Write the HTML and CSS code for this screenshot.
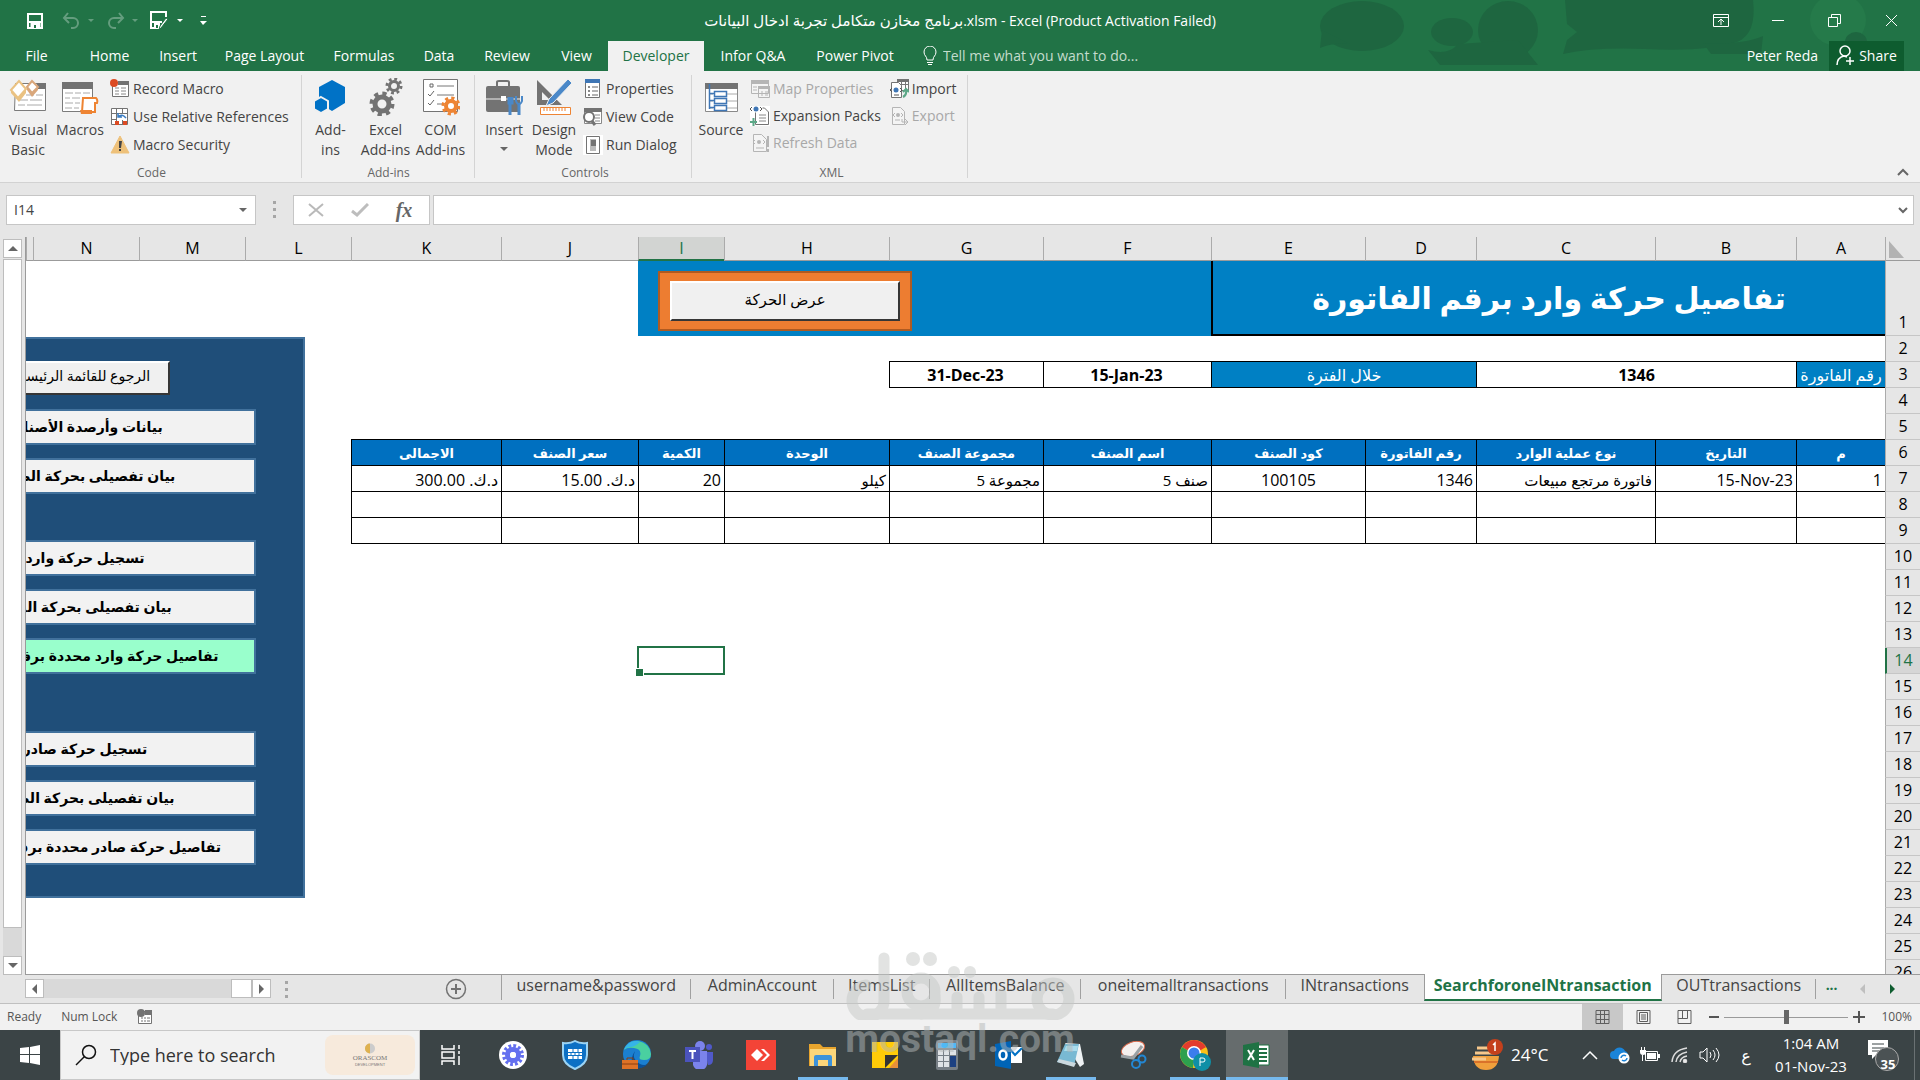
FILE: index.html
```html
<!DOCTYPE html>
<html lang="en">
<head>
<meta charset="utf-8">
<title>Excel</title>
<link rel="stylesheet" href="styles.css">
</head>
<body>
<header class="top">
  <svg class="clouds" width="600" height="65" viewBox="1320 0 600 65" fill="#1e6640">
    <ellipse cx="1362" cy="26" rx="42" ry="25"/><path d="M1322 30l-2 18q14-6 30-4z"/>
    <ellipse cx="1452" cy="32" rx="21" ry="14"/><ellipse cx="1508" cy="30" rx="30" ry="29"/><path d="M1428 50q20 6 30-6l60-4 20 25H1440z"/>
    <path d="M1565 0h188q4 34-16 42-30 10-92 7-50-2-82 5l4-14 10-8-10-8z"/><path d="M1703 43q40 2 60-7l-2 18h-50z"/>
    <ellipse cx="1838" cy="20" rx="28" ry="26" fill="#257a4a"/><ellipse cx="1856" cy="42" rx="11" ry="10"/>
  </svg>
  <div class="titlebar">
    <div class="qat">
      <button class="ic" aria-label="Save"><svg width="18" height="18" viewBox="0 0 18 18" fill="none" stroke="#fff" stroke-width="2"><path d="M2 2h14v14H2zM3 10h12"/><path d="M5 10h9v6H5zM7 13v3" fill="#fff" stroke="#fff" stroke-width="1"/><path d="M8 13h2v3H8z" fill="#217346" stroke="none"/></svg></button>
      <button class="ic dim" aria-label="Undo"><svg width="32" height="18" viewBox="0 0 32 18"><path d="M6 1L2 6l5 5M2 6h9a5 5 0 0 1 0 10H9" fill="none" stroke="#fff" stroke-width="2"/><path d="M26 7h6l-3 3z" fill="#fff"/></svg></button>
      <button class="ic dim" aria-label="Redo"><svg width="32" height="18" viewBox="0 0 32 18"><path d="M13 1l4 5-5 5M17 6H8a5 5 0 0 0 0 10h2" fill="none" stroke="#fff" stroke-width="2"/><path d="M26 7h6l-3 3z" fill="#fff"/></svg></button>
      <button class="ic" aria-label="Save as"><svg width="34" height="20" viewBox="0 0 34 20"><path d="M16 6V1H1v16h9" fill="none" stroke="#fff" stroke-width="2"/><path d="M2 10h10v2H2zM4 12h6v5H4z" fill="#fff"/><path d="M6 14h2v3H6z" fill="#217346"/><path d="M18 8l-7 9-2 2 1-4 6-8z" fill="#fff" stroke="#217346"/><path d="M27 8h6l-3 3z" fill="#fff"/></svg></button>
      <button class="ic" aria-label="Customize toolbar"><svg width="7" height="10" viewBox="0 0 7 10" fill="#fff"><path d="M1 0h5v1H1zM0 5h7L3 9z"/></svg></button>
    </div>
    <h1 class="wtitle"><bdi dir="rtl">برنامج مخازن متكامل تجربة ادخال البيانات</bdi>.xlsm - Excel (Product Activation Failed)</h1>
    <div class="winctl">
      <button aria-label="Ribbon options"><svg width="16" height="14" viewBox="0 0 16 14" fill="none" stroke="#fff"><path d="M.5.5h15v12H.5zM1 3.500h14M8 11V5M5 8l3-3 3 3"/></svg></button>
      <button aria-label="Minimize"><svg width="14" height="14" viewBox="0 0 14 14"><path d="M1 6h12v1H1z" fill="#fff"/></svg></button>
      <button aria-label="Restore"><svg width="13" height="13" viewBox="0 0 13 13" fill="none" stroke="#fff"><path d="M.5 3.500h9v9h-9zM3.500 3V.5h9v9H10"/></svg></button>
      <button aria-label="Close"><svg width="13" height="13" viewBox="0 0 13 13" stroke="#fff"><path d="M1 1l11 11M12 1L1 12"/></svg></button>
    </div>
  </div>
  <nav class="tabs">
    <a href="#">File</a><a href="#">Home</a><a href="#">Insert</a><a href="#">Page Layout</a><a href="#">Formulas</a><a href="#">Data</a><a href="#">Review</a><a href="#">View</a><a href="#" class="on">Developer</a><a href="#">Infor Q&amp;A</a><a href="#">Power Pivot</a>
    <label class="tell"><svg width="14" height="20" viewBox="0 0 14 20" fill="none" stroke="#fff"><path d="M4 14c0-4-3-4-3-8a6 6 0 0 1 12 0c0 4-3 4-3 8zM4 16.500h6M5 18.500h4"/></svg><input aria-label="Tell me" placeholder="Tell me what you want to do..."></label>
    <span class="user">Peter Reda</span>
    <button class="share"><svg width="19" height="22" viewBox="0 0 19 22" fill="none" stroke="#fff" stroke-width="1.500"><circle cx="9" cy="6" r="5"/><path d="M1 20c0-6 3-8 7-9l3 1M14 12v8M10 16h8"/></svg>Share</button>
  </nav>
</header>

<section class="ribbon">
  <div class="group code">
    <div class="tools">
      <button class="big b1"><svg width="38" height="36" viewBox="0 0 38 36"><path d="M6.500 4.500h30v27h-31z" fill="#fff" stroke="#7b7b7b"/><path d="M28 4h9v6h-9z" fill="#737373"/><path d="M9 16h6m2 0h8m2 0h7M9 21h10m2 0h12M9 26h7m2 0h15" stroke="#aaa"/><path d="M2 11v3l8 9 7-9v-4z" fill="#eac282"/><path d="M2 11L10 2l7 8-8 9z" fill="#fff" stroke="#eac282" stroke-width="2"/><path d="M18 8v3l5 7 6-7V8z" fill="#d9a77b"/><path d="M18 8l5-6 6 6-6 6z" fill="#fff" stroke="#d9a77b" stroke-width="2"/></svg><span>Visual<br>Basic</span></button>
      <button class="big b1"><svg width="38" height="36" viewBox="0 0 38 36"><path d="M1.500 4.500h30v28h-30z" fill="#fff" stroke="#7b7b7b"/><path d="M1 3h31v7H1z" fill="#737373"/><path d="M4 14h8m2 0h6m2 0h7M4 19h5m2 0h8m2 0h6M4 24h8m2 0h5M4 29h7m2 0h5" stroke="#aaa"/><path d="M22 19h13q2 2 1 5h-2v9H21z" fill="#fff" stroke="#ee8433" stroke-width="2"/><path d="M19 31h12v4H20z" fill="#ee8433"/></svg><span>Macros</span></button>
      <div class="col">
        <button><svg width="20" height="20" viewBox="0 0 20 20"><path d="M2.500 3.500h16v14h-16z" fill="#fff" stroke="#737373"/><path d="M8 2h11v4H8z" fill="#737373"/><path d="M5 9h4m2 0h5M5 12h4m2 0h5M5 15h4m2 0h5" stroke="#888"/><circle cx="4" cy="4" r="4" fill="#dc4b23"/></svg>Record Macro</button>
        <button><svg width="20" height="20" viewBox="0 0 20 20"><path d="M1.500 1.500h16v16h-16zM1 6.500h17M1 12.500h17M6.500 1v17M12.500 1v17" fill="#fff" stroke="#737373"/><path d="M7 7h10v6H7z" fill="#fff"/><path d="M8 10q4-4 8 1M8 6v4h4" fill="none" stroke="#3a7cc2" stroke-width="1.500"/><path d="M5 14h4v4H5zm8 0h4v4h-4z" fill="#dc4b23"/></svg>Use Relative References</button>
        <button><svg width="20" height="20" viewBox="0 0 20 20"><path d="M10 1l9 17H1z" fill="#eec17a" stroke="#eec17a" stroke-linejoin="round"/><path d="M9 6h3l-1 7H9zM9 14h2v2H9z" fill="#444"/></svg>Macro Security</button>
      </div>
    </div><h2>Code</h2>
  </div>
  <div class="group addins">
    <div class="tools">
      <button class="big b2"><svg width="38" height="36" viewBox="0 0 38 36" fill="#0072c6"><path d="M20 1l13 7v16l-13 8-13-8V8z"/><path d="M9 18l7 4v8l-7 4-7-4v-8z" stroke="#f0f0f0" stroke-width="2"/></svg><span>Add-<br>ins</span></button>
      <button class="big b2"><svg width="38" height="38" viewBox="0 0 38 38" fill="none" stroke="#737373"><circle cx="15" cy="26" r="7" stroke-width="5"/><circle cx="15" cy="26" r="10.500" stroke-width="4" stroke-dasharray="4.200 4.050"/><circle cx="27" cy="8" r="4.500" stroke-width="3"/><circle cx="27" cy="8" r="7" stroke-width="3" stroke-dasharray="2.800 2.700"/></svg><span>Excel<br>Add-ins</span></button>
      <button class="big b2"><svg width="38" height="38" viewBox="0 0 38 38"><path d="M1.500 1.500h34v32h-34z" fill="#fff" stroke="#737373"/><path d="M8 6h3v3H8zM6 16l2 2 4-5M6 25l2 2 4-5" fill="none" stroke="#666"/><path d="M15 8h17M15 17h17M15 26h6" stroke="#777"/><circle cx="29" cy="28" r="5" fill="none" stroke="#ee8433" stroke-width="4"/><circle cx="29" cy="28" r="8" fill="none" stroke="#ee8433" stroke-width="3" stroke-dasharray="3.200 3.083"/></svg><span>COM<br>Add-ins</span></button>
    </div><h2>Add-ins</h2>
  </div>
  <div class="group controls">
    <div class="tools">
      <button class="big b3"><svg width="38" height="38" viewBox="0 0 38 38"><path d="M12 8V4q0-1 2-1h8q2 0 2 1v4" fill="none" stroke="#737373" stroke-width="2"/><rect x="1" y="8" width="34" height="26" rx="2" fill="#737373"/><path d="M1 21h16M21 21h14" stroke="#f0f0f0"/><path d="M16 18h5v5h-5z" fill="#fff"/><path d="M25 19v18M24 19v6h3v-6M34 26v11" stroke="#4a88c8" stroke-width="3" fill="none"/><path d="M31 18v5q1 3 3 3t3-3v-5" fill="none" stroke="#4a88c8" stroke-width="2"/></svg><span>Insert<i class="dd"></i></span></button>
      <button class="big b3"><svg width="38" height="38" viewBox="0 0 38 38"><path d="M2 2v25h25zM7 14l8 8H7z" fill="#737373" fill-rule="evenodd"/><path d="M33 1l4 4-19 20-7 3 3-7z" fill="#4a88c8" stroke="#f0f0f0"/><path d="M5.500 29.500h30v7h-30zM9 30v3m3-3v3m3-3v3m3-3v3m3-3v3m3-3v3m3-3v3m3-3v3" fill="#fff" stroke="#ee8433"/></svg><span>Design<br>Mode</span></button>
      <div class="col">
        <button><svg width="20" height="20" viewBox="0 0 20 20"><path d="M2.500 1.500h14v17h-14z" fill="#fff" stroke="#737373"/><path d="M2 0h15v4H2z" fill="#3f76b5"/><path d="M5 7h2v2H5zm0 4h2v2H5zm0 4h2v2H5z" fill="#888"/><path d="M9 8h6M9 12h6M9 16h6" stroke="#666"/></svg>Properties</button>
        <button><svg width="20" height="20" viewBox="0 0 20 20"><path d="M1.500 2.500h17v14h-17z" fill="#fff" stroke="#888"/><path d="M1 1h18v4H1z" fill="#737373"/><path d="M12 8h5M12 11h5M12 14h5" stroke="#888"/><circle cx="6" cy="10" r="5" fill="#fff" stroke="#737373" stroke-width="2"/><path d="M9 14l3 4" stroke="#737373" stroke-width="3"/></svg>View Code</button>
        <button><svg width="20" height="20" viewBox="0 0 20 20"><path d="M0 0h20v20H0z" fill="#fff"/><path d="M3.500 1.500h13v17h-13z" fill="#fff" stroke="#737373"/><path d="M7 4h6v12H7z" fill="#bbb"/><path d="M8 5h5v6H8z" fill="#737373"/></svg>Run Dialog</button>
      </div>
    </div><h2>Controls</h2>
  </div>
  <div class="group xml">
    <div class="tools">
      <button class="big b3"><svg width="36" height="34" viewBox="0 0 36 34"><path d="M2.500 3.500h32v28h-32z" fill="#fff" stroke="#8a8a8a"/><path d="M2 3h33v6H2z" fill="#737373"/><path d="M6 14h4M6 21h4M6 28h4M24 14h10M24 21h10M24 28h10" stroke="#aaa"/><path d="M6.500 4v25M6 13.500h5M6 20.500h5M6 27.500h5M11.500 11.500h12v5h-12zM11.500 18.500h12v5h-12zM11.500 25.500h12v5h-12z" fill="none" stroke="#3f76b5" stroke-width="1.500"/></svg><span>Source</span></button>
      <div class="col c27">
        <button disabled><svg width="20" height="20" viewBox="0 0 20 20"><path d="M1.500 1.500h17v13h-17zM8.500 8.500h11v10h-11z" fill="#f4f4f4" stroke="#b5b5b5"/><path d="M1 1h18v4H1zM8 7h12v3H8z" fill="#b5b5b5"/><path d="M3 8h4M3 11h4M11 13h2m2 0h3M11 16h2m2 0h3" stroke="#b5b5b5"/></svg>Map Properties</button>
        <button><svg width="20" height="20" viewBox="0 0 20 20"><path d="M0 0h20v20H0z" fill="#fff"/><path d="M5.500 6.500v12h13V6l-4-4h-2" fill="none" stroke="#737373"/><path d="M9 9h7M9 12h7M9 15h7" stroke="#888"/><circle cx="6" cy="3" r="2.500" fill="#3f76b5"/><path d="M2 1L0 3l2 2m8-4l2 2-2 2" fill="none" stroke="#555"/><path d="M0 16h7M3.500 12v8" stroke="#5ca887" stroke-width="2"/></svg>Expansion Packs</button>
        <button disabled><svg width="20" height="20" viewBox="0 0 20 20"><path d="M3.500 1.500h8l5 5v12h-13z" fill="#f4f4f4" stroke="#b5b5b5"/><circle cx="9" cy="9" r="2" fill="#b5b5b5"/><path d="M5 7L3 9l2 2m8-4l2 2-2 2M6 15h8" fill="none" stroke="#b5b5b5"/><path d="M18 3v11m0 2v3" stroke="#b5b5b5" stroke-width="2"/></svg>Refresh Data</button>
      </div>
      <div class="col c27">
        <button><svg width="20" height="20" viewBox="0 0 20 20"><path d="M8.500 1.500h11v10h-11zM8 5.500h12M12.500 1v10M16.500 1v10" fill="#fff" stroke="#777"/><path d="M8 0h12v3H8z" fill="#737373"/><path d="M2.500 3.500h7l3 3v12h-10z" fill="#fff" stroke="#737373"/><circle cx="7" cy="11" r="2.500" fill="#3f76b5"/><path d="M3 9l-2 2 2 2m8-4l2 2-2 2M5 16h5" fill="none" stroke="#555"/><path d="M14 18q4-2 3-7M14 13l3-3 3 3" fill="none" stroke="#5ca887" stroke-width="2"/></svg>Import</button>
        <button disabled><svg width="20" height="20" viewBox="0 0 20 20"><path d="M3.500 1.500h8l4 4v13h-12z" fill="#f4f4f4" stroke="#b5b5b5"/><circle cx="9" cy="9" r="2" fill="#b5b5b5"/><path d="M6 7L4 9l2 2m6-4l2 2-2 2M6 14h5M13 13v3h6m-3-3l3 3-3 3" fill="none" stroke="#b5b5b5"/></svg>Export</button>
      </div>
    </div><h2>XML</h2>
  </div>
  <button class="collapse" aria-label="Collapse ribbon"><svg width="12" height="8" viewBox="0 0 12 8" fill="none" stroke="#666" stroke-width="2"><path d="M1 7l5-5 5 5"/></svg></button>
</section>

<section class="fbar">
  <label class="namebox"><input aria-label="Name box" value="I14"><i class="dd"></i></label>
  <i class="dots"></i>
  <div class="fx">
    <button aria-label="Cancel"><svg width="16" height="14" viewBox="0 0 16 14" stroke="#b9b9b9" stroke-width="2"><path d="M1 1l14 12M15 1L1 13"/></svg></button>
    <button aria-label="Enter"><svg width="18" height="14" viewBox="0 0 18 14" fill="none" stroke="#bdbdbd" stroke-width="3"><path d="M1 8l5 4L17 1"/></svg></button>
    <button class="fn">fx</button>
  </div>
  <label class="formula"><input aria-label="Formula"><svg width="10" height="7" viewBox="0 0 10 7" fill="none" stroke="#666" stroke-width="2"><path d="M1 1l4 4 4-4"/></svg></label>
</section>

<main class="work">
  <div class="vscroll"><button aria-label="Up"><i class="up"></i></button><span class="thumb"></span><span class="track"></span><button aria-label="Down"><i class="down"></i></button></div>
  <div class="sheet" dir="rtl">
    <table class="cells">
      <colgroup><col class="w35"><col class="w89"><col class="w141"><col class="w179"><col class="w111"><col class="w154"><col class="w168"><col class="w154"><col class="w165"><col class="w86"><col class="w137"><col class="w150"><col class="w106"><col class="w106"><col class="w106"><col></colgroup>
      <thead><tr><th class="corner"><svg width="15" height="17" viewBox="0 0 15 17"><path d="M0 0l15 17H0z" fill="#b2b2b2"/></svg></th><th>A</th><th>B</th><th>C</th><th>D</th><th>E</th><th>F</th><th>G</th><th>H</th><th class="sel">I</th><th>J</th><th>K</th><th>L</th><th>M</th><th>N</th><th></th></tr></thead>
      <tbody>
      <tr class="r1"><th>1</th><td colspan="5" class="title">تفاصيل حركة وارد برقم الفاتورة</td><td colspan="4" class="band"></td><td colspan="6"></td></tr>
      <tr><th>2</th><td colspan="7" class="under"></td><td colspan="8"></td></tr>
      <tr class="filter"><th>3</th><td class="lbl">رقم الفاتورة</td><td colspan="2">1346</td><td colspan="2" class="lbl">خلال الفترة</td><td dir="ltr">15-Jan-23</td><td dir="ltr">31-Dec-23</td><td colspan="8" class="none"></td></tr>
      <tr><th>4</th><td colspan="15"></td></tr>
      <tr><th>5</th><td colspan="11" class="under"></td><td colspan="4"></td></tr>
      <tr class="heads"><th>6</th><td>م</td><td>التاريخ</td><td>نوع عملية الوارد</td><td>رقم الفاتورة</td><td>كود الصنف</td><td>اسم الصنف</td><td>مجموعة الصنف</td><td>الوحدة</td><td>الكمية</td><td>سعر الصنف</td><td>الاجمالى</td><td colspan="4" class="none"></td></tr>
      <tr class="data"><th>7</th><td class="num">1</td><td class="num"><bdi dir="ltr">15-Nov-23</bdi></td><td>فاتورة مرتجع مبيعات</td><td class="num">1346</td><td class="num mid">100105</td><td>صنف 5</td><td>مجموعة 5</td><td>كيلو</td><td class="num">20</td><td class="num">د.ك.‏ 15.00</td><td class="num">د.ك.‏ 300.00</td><td colspan="4" class="none"></td></tr>
      <tr class="data"><th>8</th><td></td><td></td><td></td><td></td><td></td><td></td><td></td><td></td><td></td><td></td><td></td><td colspan="4" class="none"></td></tr>
      <tr class="data"><th>9</th><td></td><td></td><td></td><td></td><td></td><td></td><td></td><td></td><td></td><td></td><td></td><td colspan="4" class="none"></td></tr>
      <tr><th>10</th><td colspan="15"></td></tr>
      <tr><th>11</th><td colspan="15"></td></tr>
      <tr><th>12</th><td colspan="15"></td></tr>
      <tr><th>13</th><td colspan="15"></td></tr>
      <tr><th class="sel">14</th><td colspan="8"></td><td class="active"></td><td colspan="6"></td></tr>
      <tr><th>15</th><td colspan="15"></td></tr>
      <tr><th>16</th><td colspan="15"></td></tr>
      <tr><th>17</th><td colspan="15"></td></tr>
      <tr><th>18</th><td colspan="15"></td></tr>
      <tr><th>19</th><td colspan="15"></td></tr>
      <tr><th>20</th><td colspan="15"></td></tr>
      <tr><th>21</th><td colspan="15"></td></tr>
      <tr><th>22</th><td colspan="15"></td></tr>
      <tr><th>23</th><td colspan="15"></td></tr>
      <tr><th>24</th><td colspan="15"></td></tr>
      <tr><th>25</th><td colspan="15"></td></tr>
      <tr><th>26</th><td colspan="15"></td></tr>
      </tbody>
    </table>
    <div class="show"><button>عرض الحركة</button></div>
    <div class="menu">
      <button class="back">الرجوع للقائمة الرئيسية</button>
      <div class="set"><button>بيانات وأرصدة الأصناف</button><button>بيان تفصيلى بحركة الصنف</button></div>
      <div class="set"><button>تسجيل حركة وارد</button><button>بيان تفصيلى بحركة الوارد</button><button class="cur">تفاصيل حركة وارد محددة برقم الفاتورة</button></div>
      <div class="set last"><button>تسجيل حركة صادر</button><button>بيان تفصيلى بحركة الصادر</button><button>تفاصيل حركة صادر محددة برقم الفاتورة</button></div>
    </div>
  </div>
</main>

<section class="sheetbar">
  <div class="hscroll"><button aria-label="Left"><i class="left"></i></button><span class="track"></span><span class="thumb"></span><button aria-label="Right"><i class="right"></i></button></div>
  <i class="dots"></i>
  <button class="plus" aria-label="New sheet"><svg width="22" height="22" viewBox="0 0 22 22" fill="none" stroke="#737373"><circle cx="11" cy="11" r="9.500" stroke-width="1.500"/><path d="M11 6v10M6 11h10" stroke-width="2"/></svg></button>
  <nav class="stabs">
    <a href="#">username&amp;password</a><a href="#">AdminAccount</a><a href="#">ItemsList</a><a href="#">AllItemsBalance</a><a href="#">oneitemalltransactions</a><a href="#">INtransactions</a><a href="#" class="on">SearchforoneINtransaction</a><a href="#">OUTtransactions</a>
  </nav>
  <button class="more">...</button>
  <button class="ar" aria-label="Previous"><i class="left"></i></button>
  <button class="ar go" aria-label="Next"><i class="right"></i></button>
</section>

<section class="status">
  <span>Ready</span><span>Num Lock</span>
  <button class="rec" aria-label="Record macro"><svg width="16" height="16" viewBox="0 0 16 16"><path d="M1.500 2.500h13v12h-13z" fill="#fff" stroke="#737373"/><path d="M8 1h7v5H8z" fill="#737373"/><path d="M4 9h2m1 0h2m1 0h3M4 12h2m1 0h2m1 0h3" stroke="#737373"/><circle cx="4" cy="4" r="4" fill="#737373"/></svg></button>
  <div class="views">
    <button class="on" aria-label="Normal"><svg width="15" height="14" viewBox="0 0 15 14" fill="none" stroke="#5e5e5e"><path d="M1 .5h13v13H1zM1 4.500h13M1 9.500h13M5.500 0v14M9.500 0v14"/></svg></button>
    <button aria-label="Page layout"><svg width="15" height="14" viewBox="0 0 15 14" fill="none" stroke="#5e5e5e"><path d="M1 .5h13v13H1zM3.500 2.500h8v9h-8zM5 5h5M5 7h5M5 9h5"/></svg></button>
    <button aria-label="Page break"><svg width="15" height="14" viewBox="0 0 15 14" fill="none" stroke="#5e5e5e"><path d="M1 .5h13v13H1zM5.500 0v8.500h5V0M1 8.500h5"/></svg></button>
  </div>
  <div class="zoom"><button aria-label="Zoom out"><svg width="10" height="10"><path d="M0 4h10v2H0z" fill="#555"/></svg></button><input type="range" aria-label="Zoom" min="0" max="200" value="100"><button aria-label="Zoom in"><svg width="12" height="12"><path d="M0 5h12v2H0zM5 0h2v12H5z" fill="#555"/></svg></button></div>
  <button class="pct">100%</button>
</section>

<footer class="taskbar">
  <button class="start" aria-label="Start"><svg width="20" height="20" viewBox="0 0 20 20" fill="#fff"><path d="M0 3l9-1v7H0zM10 2l10-2v9H10zM0 10h9v8l-9-1zM10 10h10v10l-10-2z"/></svg></button>
  <label class="search"><svg width="22" height="22" viewBox="0 0 22 22" fill="none" stroke="#111" stroke-width="1.500"><circle cx="14" cy="8" r="6.500"/><path d="M9.500 12.500L1 21"/></svg><input aria-label="Search" placeholder="Type here to search">
    <span class="promo"><svg width="12" height="11" viewBox="0 0 12 11"><circle cx="6" cy="5.500" r="5" fill="#ccc"/><path d="M6 .5a5 5 0 0 0 0 10z" fill="#dfb14e"/></svg><b>ORASCOM</b><small>DEVELOPMENT</small></span></label>
  <div class="apps">
    <button aria-label="Task view"><svg width="20" height="20" viewBox="0 0 20 20" fill="none" stroke="#fff" stroke-width="1.500"><path d="M1 0v4h12V0M1 20v-4h12v4M1 7h12v6H1zM18 0v4M18 6v3M18 11v9"/></svg></button>
    <button aria-label="Anytime"><svg width="28" height="28" viewBox="0 0 28 28"><circle cx="14" cy="14" r="14" fill="#fff"/><circle cx="14" cy="14" r="9" fill="none" stroke="#6470ef" stroke-width="4" stroke-dasharray="2.700 2.012"/><circle cx="14" cy="14" r="5.500" fill="none" stroke="#6470ef" stroke-width="5"/><circle cx="14" cy="14" r="3" fill="#fff"/></svg></button>
    <button aria-label="Shield"><svg width="26" height="30" viewBox="0 0 26 30"><path d="M13 1q5 3 12 2v12q0 9-12 14Q1 24 1 15V3q7 1 12-2z" fill="#0c70c4" stroke="#9bd4f5" stroke-width="2"/><path d="M6 9h14v10H6z" fill="#fff"/><path d="M6 12.500h14M6 15.500h14M11 9v3m5-3v3M9 13v3m4-3v3m4-3v3M11 16v3m5-3v3" stroke="#0c70c4"/></svg></button>
    <button aria-label="Edge"><svg width="30" height="30" viewBox="0 0 30 30"><circle cx="15" cy="14" r="14" fill="#1b7fd0"/><path d="M2 10A14 14 0 0 1 29 14q0 6-7 6-6 0-4-4 2-7-6-8Q5 7 2 10z" fill="#4ad0a0"/><path d="M2 9Q8-2 18 2q-5 5-10 5-4 1-6 2z" fill="#35b4e8"/><path d="M13 11q-4 8 5 13 4 2 8 0-5 5-12 4Q6 22 13 11z" fill="#0c4f94"/><path d="M0 20h16v9H0z" fill="#dd7226"/><path d="M5 20v-2h6v2M0 24h16" fill="none" stroke="#8a3f10"/></svg></button>
    <button aria-label="Teams"><svg width="30" height="28" viewBox="0 0 30 28"><circle cx="16" cy="5" r="5" fill="#7b83eb"/><circle cx="25" cy="6" r="3" fill="#5059c9"/><path d="M21 11h8v8q0 5-5 5z" fill="#5059c9"/><path d="M9 10h14v10a7 7 0 0 1-14 4z" fill="#7b83eb"/><path d="M1 6h15v15H1z" fill="#4b53bc"/><path d="M5 10h7M8.500 10v8" stroke="#fff" stroke-width="2"/></svg></button>
    <button aria-label="AnyDesk"><svg width="30" height="30" viewBox="0 0 30 30"><path d="M0 0h30v30H0z" fill="#f34437"/><path d="M5 15l6-6 6 6-6 6z" fill="#fff"/><path d="M15 9h3l6 6-6 6h-3l6-6z" fill="#fff"/></svg></button>
    <button class="run" aria-label="Explorer"><svg width="28" height="26" viewBox="0 0 28 26"><path d="M0 2h11l3 3h13v19H0z" fill="#e8a52d"/><path d="M1 7h26v17H1z" fill="#fcd67a"/><path d="M5 24v-9q0-2 2-2h14q2 0 2 2v9h-4v-6H9v6z" fill="#3d93da"/></svg></button>
    <button aria-label="Notes"><svg width="26" height="28" viewBox="0 0 26 28"><path d="M0 1h26v26H0z" fill="#ffcb08"/><path d="M13 27V14h13z" fill="#333"/><path d="M17 27l9-10v10z" fill="#e8903a"/></svg></button>
    <button aria-label="Calculator"><svg width="24" height="30" viewBox="0 0 24 30"><rect x="1" width="22" height="30" rx="2" fill="#777f86"/><path d="M3 3h18v5H3z" fill="#50b8f5"/><path d="M3 10h5v5H3zm6 0h5v5H9zm6 0h6v5h-6zM3 16h5v5H3zm6 0h5v5H9zM3 22h5v5H3zm6 0h5v5H9z" fill="#dfe3e6"/><path d="M15 16h6v11h-6z" fill="#1c4182"/></svg></button>
    <button aria-label="Outlook"><svg width="28" height="28" viewBox="0 0 28 28"><path d="M13 6h14v16H13z" fill="#fff"/><path d="M14 7l6 7 7-7" fill="none" stroke="#0072c6" stroke-width="2"/><path d="M0 3l16-3v28L0 25z" fill="#0064b6"/><ellipse cx="8" cy="14" rx="3.500" ry="4.500" fill="none" stroke="#fff" stroke-width="2.500"/></svg></button>
    <button class="run" aria-label="Notepad"><svg width="28" height="26" viewBox="0 0 28 26"><path d="M8 1l15 1 4 20-4 3z" fill="#eef2f4"/><path d="M8 2h14l-5 22-17-4z" fill="#79b9d3"/><path d="M9 4h12l-1 5-13 0z" fill="#a9dcec"/><path d="M2 17l17 4-2 4-17-5z" fill="#cbd8de"/></svg></button>
    <button aria-label="Snipping tool"><svg width="28" height="28" viewBox="0 0 28 28"><ellipse cx="14" cy="8" rx="12" ry="7" fill="#f5f0ee" stroke="#d8684a" transform="rotate(-20 14 8)"/><path d="M2 15l12 2 9-12" fill="none" stroke="#9aa1a5" stroke-width="3"/><g fill="none" stroke="#2387d3" stroke-width="2"><circle cx="17" cy="23" r="4"/><circle cx="23" cy="18" r="3.500"/></g></svg></button>
    <button class="run" aria-label="Chrome"><svg width="32" height="32" viewBox="0 0 32 32"><circle cx="15" cy="15" r="14" fill="#fbc116"/><path d="M15 15L2.900 8A14 14 0 0 1 27.100 8z" fill="#e33b2e"/><path d="M15 15L2.900 8A14 14 0 0 0 14 29z" fill="#2da04e"/><circle cx="15" cy="14" r="7" fill="#fff"/><circle cx="15" cy="14" r="5.500" fill="#3b7ded"/><circle cx="23" cy="23" r="9" fill="#0f8fa6"/><path d="M21 27v-8h3a2 2 0 0 1 0 4h-3" fill="none" stroke="#fff"/></svg></button>
    <button class="run now" aria-label="Excel"><svg width="28" height="26" viewBox="0 0 28 26"><path d="M14 3h12v20H14z" fill="#fff" stroke="#1f7244"/><path d="M16 7h8M16 11h8M16 15h8M16 19h8" stroke="#1f7244" stroke-width="2"/><path d="M0 3l16-3v26L0 23z" fill="#1f7244"/><path d="M5 8l6 10M11 8L5 18" stroke="#fff" stroke-width="2"/></svg></button>
  </div>
  <div class="tray">
    <button class="wx"><svg width="32" height="32" viewBox="0 0 32 32"><path d="M2 17h26q-1 14-13 14T2 17z" fill="#f0a03c"/><path d="M6 9h12M4 14h20M1 20h14" stroke="#f6c88c" stroke-width="3"/><path d="M3 23h24" stroke="#d9722a" stroke-width="2"/><circle cx="24" cy="8" r="8" fill="#c4401c"/><path d="M22 6l2-2v8" fill="none" stroke="#fff" stroke-width="1.500"/></svg>24°C</button>
    <button aria-label="Hidden icons"><svg width="16" height="10" viewBox="0 0 16 10" fill="none" stroke="#fff" stroke-width="1.500"><path d="M1 9l7-7 7 7"/></svg></button>
    <button aria-label="OneDrive"><svg width="20" height="18" viewBox="0 0 20 18"><path d="M4 13a4 4 0 0 1 0-8 6 6 0 0 1 11 0q4 1 3 8z" fill="#1b84d8"/><circle cx="14" cy="12" r="5.500" fill="#fff"/><path d="M11 12a3 3 0 0 1 5-2m1 2a3 3 0 0 1-5 2" fill="none" stroke="#1b84d8" stroke-width="1.500"/></svg></button>
    <button aria-label="Battery"><svg width="20" height="16" viewBox="0 0 20 16"><path d="M5.500 4.500h12v9h-12z" fill="none" stroke="#fff"/><path d="M7 6h9v6H7zM18 7h2v4h-2z" fill="#fff"/><path d="M0 3h6v2q0 3-3 3T0 5zM1 0h1v3H1zM4 0h1v3H4zM2 8h1v6H2z" fill="#fff"/></svg></button>
    <button aria-label="Wi-Fi"><svg width="18" height="16" viewBox="0 0 18 16" fill="none" stroke="#ddd" stroke-width="1.500"><path d="M1 15Q2 3 16 1M5 15q1-8 11-10M9 15q1-5 7-6"/><circle cx="14" cy="14" r="1.500" fill="#fff"/></svg></button>
    <button aria-label="Volume"><svg width="22" height="16" viewBox="0 0 22 16" fill="none" stroke="#fff"><path d="M1 5h3l4-4v14l-4-4H1zM11 5q2 3 0 6M14 3q4 5 0 10M17 1q6 7 0 14"/></svg></button>
    <button class="lang">ع</button>
    <button class="clock">1:04 AM<br>01-Nov-23</button>
    <button class="note" aria-label="Notifications"><svg width="34" height="32" viewBox="0 0 34 32"><path d="M0 1h20v15H8l-4 4v-4H0z" fill="#fff"/><path d="M4 5h12M4 9h12M4 12h8" stroke="#3b4446"/><circle cx="19" cy="20" r="11.500" fill="#4b5254" stroke="#aaa"/></svg><span class="badge">35</span></button>
  </div>
</footer>

<div class="mark" aria-hidden="true">
  <svg width="230" height="68" viewBox="0 0 230 68" fill="none" stroke="#c6c9c7" stroke-width="11" stroke-linecap="round">
    <path d="M39 6v42a16 16 0 1 1-18-15"/><path d="M22 62H208"/><circle cx="76" cy="40" r="14"/><path d="M90 44q2 16-14 18"/><path d="M112 45v15M134 45v15M156 42v18"/><circle cx="208" cy="47" r="16"/>
    <g fill="#c6c9c7" stroke="none"><circle cx="68" cy="7" r="7"/><circle cx="85" cy="7" r="7"/><circle cx="109" cy="20" r="6"/><circle cx="125" cy="20" r="6"/></g>
  </svg>
  <span>mostaql.com</span>
</div>
</body>
</html>
```
FILE: styles.css
```css
* { box-sizing: border-box; }
body { margin: 0; height: 100vh; display: flex; flex-direction: column; overflow: hidden; position: relative;
  font: 14px/20px "Open Sans", "Noto Sans", "DejaVu Sans", sans-serif; color: #444; background: #e6e6e6; }
button, input { font: inherit; color: inherit; background: none; border: 0; padding: 0; margin: 0; min-width: 0; outline: 0; }
button { display: flex; align-items: center; justify-content: center; }
a { color: inherit; text-decoration: none; }
svg { display: block; flex: none; }
h1, h2 { margin: 0; font-size: 14px; font-weight: 400; }

.top { background: #217346; color: #fff; position: relative; flex: none; }
.clouds { position: absolute; right: 0; top: 0; }
.titlebar { position: relative; height: 41px; display: grid; grid-template-columns: 1fr auto 1fr; align-items: center; }
.wtitle bdi { font-size: 15px; }
.qat { display: flex; align-items: center; gap: 12px; padding-left: 26px; }
.qat .ic:first-child { margin-right: 6px; }
.qat .ic:last-child { margin-left: 4px; }
.dim { opacity: .3; }
.winctl { display: flex; justify-content: flex-end; }
.winctl button { width: 57px; height: 38px; }
.tabs { position: relative; height: 30px; display: grid; grid-template-columns: 73px 73px 64px 109px 90px 60px 76px 63px 96px 98px 106px 1fr auto auto; padding-right: 16px; align-items: stretch; }
.tabs a { display: flex; align-items: center; justify-content: center; }
.tabs .on { background: #f1f1f1; color: #217346; }
.tell { display: flex; align-items: center; gap: 6px; padding-left: 15px; }
.tell input { width: 240px; }
.tell input::placeholder { color: #c4dccd; opacity: 1; }
.user { padding: 5px 11px; }
.share { background: #0e5c2f; gap: 4px; width: 75px; }

.ribbon { flex: none; display: flex; background: #f1f1f1; height: 112px; border-bottom: 1px solid #d2d2d2; padding: 4px 0; position: relative; }
.group { display: flex; flex-direction: column; border-right: 1px solid #d4d4d4; }
.group h2 { text-align: center; font-size: 12px; line-height: 16px; color: #666; margin-top: 2px; }
.tools { display: flex; height: 88px; flex: none; }
.code { width: 302px; padding-left: 2px; }
.addins { width: 173px; padding-left: 1px; }
.controls { width: 217px; padding-left: 4px; }
.xml { width: 276px; padding-left: 4px; }
.big { flex-direction: column; justify-content: flex-start; gap: 4px; padding-top: 3px; height: 88px; }
.big svg { height: 38px; }
.b1 { width: 52px; }
.b2 { width: 55px; }
.b3 { width: 50px; }
.big span { display: flex; flex-direction: column; align-items: center; text-align: center; white-space: nowrap; }
.big .dd { margin-top: 7px; }
.col { display: flex; flex-direction: column; padding-left: 4px; }
.col button { justify-content: flex-start; gap: 3px; height: 28px; white-space: nowrap; }
.c27 button { height: 27px; }
.c27 + .c27 { padding-left: 8px; }
.col button:disabled { color: #a8a8a8; }
.collapse { position: absolute; right: 11px; bottom: 6px; }
.dd { border: 4px solid transparent; border-top-color: #666; border-bottom: 0; }

.fbar { flex: none; height: 54px; padding: 12px 6px; display: flex; }
.namebox, .fx, .formula { background: #fff; border: 1px solid #c6c6c6; display: flex; align-items: center; }
.namebox { width: 250px; padding: 0 8px 0 7px; }
.namebox input { flex: 1; }
.dots { width: 3px; height: 17px; margin: 6px 17px; background: repeating-linear-gradient(#a6a6a6 0 3px, transparent 3px 7px); }
.fx { width: 137px; padding: 0 3px 0 0; }
.fx button { flex: 1; }
.fn { font: italic bold 20px/20px "Liberation Serif", serif; color: #666; }
.formula { flex: 1; margin-left: 3px; padding: 0 5px; }
.formula input { flex: 1; }

.work { flex: 1; min-height: 0; display: flex; }
.vscroll { width: 19px; margin: 2px 3px 0; display: flex; flex-direction: column; }
.vscroll button, .hscroll button, .thumb { background: #fff; border: 1px solid #bdbdbd; flex: none; }
.vscroll button { height: 19px; }
.vscroll .thumb { flex: 670; margin-top: 1px; }
.vscroll .track { flex: 28; background: #d9d9d9; }
.up, .down, .left, .right { border: 5px solid transparent; }
.up { border-bottom-color: #666; border-top: 0; }
.down { border-top-color: #666; border-bottom: 0; }
.left { border-right-color: #666; border-left: 0; }
.right { border-left-color: #666; border-right: 0; }
.sheet { flex: 1; min-width: 0; position: relative; overflow: hidden; border-left: 1px solid #9b9b9b; border-bottom: 1px solid #9b9b9b; }
.cells { width: 100%; table-layout: fixed; border-collapse: separate; border-spacing: 0; color: #000; font-size: 15px; line-height: 22px; }
.w35 { width: 35px; } .w89 { width: 89px; } .w141 { width: 141px; } .w179 { width: 179px; } .w111 { width: 111px; }
.w154 { width: 154px; } .w168 { width: 168px; } .w165 { width: 165px; } .w86 { width: 86px; }
.w137 { width: 137px; } .w150 { width: 150px; } .w106 { width: 106px; }
.cells th, .cells td { padding: 0; height: 26px; white-space: nowrap; }
.cells td { background: #fff; }
.cells th { font-weight: 400; font-size: 16px; background: #e6e6e6; border-left: 1px solid #ababab; border-bottom: 1px solid #c6c6c6; vertical-align: bottom; }
.cells tbody th { padding-bottom: 2px; }
.cells thead th { height: 24px; border-bottom-color: #9b9b9b; vertical-align: top; line-height: 22px; }
.cells thead th.sel { background: #d2d4d2; color: #217346; border-bottom: 2px solid #217346; }
.cells tbody th.sel { background: #d6d6d6; color: #217346; border-left: 2px solid #217346; }
.cells thead th.corner { padding: 4px 16px 0 0; }
.corner svg { margin: 0 auto 0 4px; }
.cells thead th.corner { padding: 4px 0 0; direction: ltr; }
.cells .r1 th { height: 75px; }
.cells .title { background: #0080c4; color: #fff; font-size: 30px; font-weight: 700; line-height: 44px; text-align: center; border-left: 2px solid #000; border-bottom: 2px solid #000; }
.cells .band { background: #0080c4; }
.cells .under { border-bottom: 1px solid #000; }
.cells .filter td, .heads td, .data td { border-left: 1px solid #000; border-bottom: 1px solid #000; }
.cells .filter td { text-align: center; font-weight: 700; font-size: 16px; }
.cells .filter .lbl { background: #0080c4; color: #fff; font-weight: 400; }
.cells .heads td { background: #0070c0; color: #fff; text-align: center; font-size: 13px; font-weight: 700; }
.cells .data td { padding: 0 3px; vertical-align: bottom; }
.cells .data .num { font-size: 16px; }
.cells .data .mid { text-align: center; }
.cells tr .none { background: #fff; border: 0; }
.cells .active { position: relative; }
.active::before { content: ""; position: absolute; inset: -2px -1px -1px -1px; border: 2px solid #217346; }
.active::after { content: ""; position: absolute; left: -3px; bottom: -3px; width: 7px; height: 7px; background: #217346; border: 1px solid #fff; }
.show { position: absolute; top: 34px; right: 1008px; width: 254px; height: 60px; padding: 8px 10px; background: #ed7d31; border: 2px solid #ae5a21; display: flex; }
.show button, .menu .back { background: #f0f0f0; border: 2px outset #d0d0d0; border-color: #fff #8a8a8a #8a8a8a #fff; color: #000; flex: 1; font-size: 15px; padding-bottom: 4px; }
.menu { position: absolute; top: 100px; right: 1615px; width: 440px; height: 561px; padding: 22px 47px 0 0; background: #1f4e79; border: 2px solid #41719c; display: flex; flex-direction: column; align-items: flex-start; gap: 46px; }
.menu button { white-space: nowrap; }
.menu .back { width: 175px; height: 34px; flex: none; margin: 0 86px -32px 0; font-size: 14px; }
.set { display: flex; flex-direction: column; gap: 13px; }
.set button { width: 342px; height: 36px; background: #f2f2f2; border: 2px solid #41719c; color: #000; font-weight: 700; font-size: 14px; }
.set .cur { background: #99ffcc; }
.last { margin-top: 11px; }

.sheetbar { flex: none; height: 29px; display: flex; border-bottom: 1px solid #c0c0c0; padding-left: 25px; }
.hscroll { width: 248px; height: 19px; margin-top: 4px; display: flex; }
.hscroll button { width: 19px; }
.hscroll .track { flex: 1; background: #d9d9d9; }
.hscroll .thumb { width: 21px; }
.sheetbar .dots { margin: 6px 14px; }
.plus { margin-left: 143px; height: 28px; width: 22px; }
.stabs { flex: 1; display: grid; grid-template-columns: 190px 143px 96px 151px 205px 138px 238px 154px; margin-left: 34px; color: #444; font-size: 16px; }
.stabs a { display: flex; justify-content: center; line-height: 20px; height: 25px; position: relative; background: linear-gradient(#a0a0a0, #a0a0a0) right 4px / 1px 20px no-repeat; }
.stabs a:first-child { border-left: 1px solid #a0a0a0; }
.stabs a:nth-child(6) { background: none; }
.stabs .on { background: #fff; color: #217346; font-weight: 700; border: 1px solid #9b9b9b; border-top: 0; border-bottom: 2px solid #217346; margin-top: -1px; height: 27px; font-size: 16px; line-height: 22px; }
.more { color: #217346; font-weight: 700; width: 32px; height: 20px; }
.ar { width: 30px; height: 28px; opacity: .3; }
.ar.go { opacity: 1; margin-right: 13px; }
.go .right { border-left-color: #0e5c2f; }

.status { flex: none; height: 26px; background: #f1f1f1; display: flex; align-items: center; font-size: 12px; padding: 0 8px 0 7px; gap: 20px; color: #555; }
.views { margin-left: auto; display: flex; align-self: stretch; }
.views button { width: 41px; }
.views .on { background: #c8c8c8; }
.zoom { display: flex; align-items: center; gap: 5px; margin-left: -16px; }
.zoom input { appearance: none; width: 124px; height: 14px; background: linear-gradient(#9a9a9a, #9a9a9a) center / 100% 1px no-repeat; }
.zoom input::-webkit-slider-thumb { appearance: none; width: 5px; height: 14px; background: #666; }
.pct { margin-left: -4px; }

.taskbar { flex: none; height: 50px; background: #3b4446; display: flex; color: #fff; }
.start { width: 60px; }
.search { width: 360px; background: #f2f2f2; border: 1px solid #c8c8c8; display: flex; align-items: center; gap: 13px; padding: 0 4px 0 14px; color: #333; }
.search input { flex: 1; font-size: 18px; }
.search input::placeholder { color: #333; opacity: 1; }
.promo { width: 90px; height: 40px; border-radius: 8px; background: #f7eadc; display: flex; flex-direction: column; align-items: center; justify-content: center; font-size: 7px; line-height: 7px; color: #777; }
.promo b { font: 7px/8px "Liberation Serif", serif; }
.promo small { font: 4px/5px "Liberation Sans", sans-serif; }
.apps { display: flex; }
.apps button { width: 62px; }
.run { background: linear-gradient(#76b9ed, #76b9ed) center bottom / 50px 3px no-repeat; }
.now { background: linear-gradient(#76b9ed, #76b9ed) center bottom / 100% 3px no-repeat, #666c6d; }
.tray { margin-left: auto; display: flex; padding-right: 5px; }
.tray button { width: 30px; }
.tray .wx { width: 80px; gap: 8px; margin-right: 24px; font-size: 17px; justify-content: flex-start; }
.tray .lang { width: 42px; font-size: 16px; }
.tray .clock { width: 88px; font-size: 15px; line-height: 23px; display: block; text-align: center; white-space: nowrap; }
.tray .note { width: 59px; border-right: 1px solid #6a7173; position: relative; margin-left: 1px; }
.badge { position: absolute; left: 17px; top: 24px; width: 30px; font-size: 13px; font-weight: 700; }

.mark { position: absolute; left: 50%; bottom: 22px; transform: translateX(-50%); opacity: .5; display: flex; flex-direction: column; align-items: center; pointer-events: none; }
.mark span { font: 700 39px/38px "Roboto", "Liberation Sans", sans-serif; color: #b4b8b8; }
```
